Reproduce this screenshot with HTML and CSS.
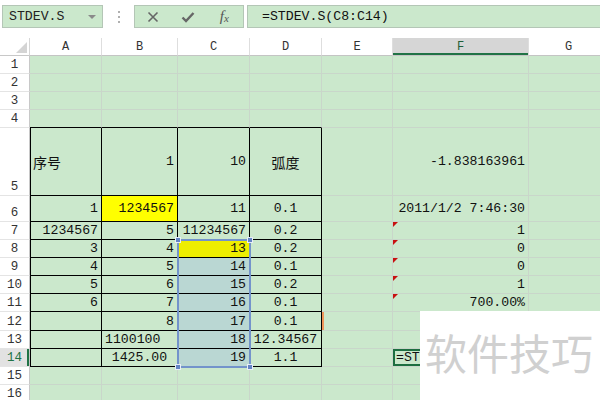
FILE: index.html
```html
<!DOCTYPE html>
<html>
<head>
<meta charset="utf-8">
<link rel="stylesheet" href="styles.css">
</head>
<body>
<div class="toolbar">
  <div class="namebox"><span>STDEV.S</span><span class="caret"></span></div>
  <div class="dots"><i></i><i></i><i></i></div>
  <div class="btns">
    <span class="btn"><svg width="12" height="12" viewBox="0 0 12 12"><path d="M1.5 1.5L10.5 10.5M10.5 1.5L1.5 10.5" stroke="#666" stroke-width="1.6" fill="none"/></svg></span>
    <span class="btn"><svg width="14" height="12" viewBox="0 0 14 12"><path d="M1.5 6.5L5 10L12.5 2" stroke="#666" stroke-width="2.4" fill="none"/></svg></span>
    <span class="btn fx"><i>f</i><i class="sx">x</i></span>
  </div>
  <div class="formula">=STDEV.S(C8:C14)</div>
</div>
<div class="sheet">
  <div class="corner"><span class="tri"></span></div>
  <div class="h">A</div><div class="h">B</div><div class="h">C</div><div class="h">D</div><div class="h">E</div><div class="h hf">F</div><div class="h">G</div>

  <div class="rh">1</div><div class="c"></div><div class="c"></div><div class="c"></div><div class="c"></div><div class="c"></div><div class="c"></div><div class="c"></div>
  <div class="rh">2</div><div class="c"></div><div class="c"></div><div class="c"></div><div class="c"></div><div class="c"></div><div class="c"></div><div class="c"></div>
  <div class="rh">3</div><div class="c"></div><div class="c"></div><div class="c"></div><div class="c"></div><div class="c"></div><div class="c"></div><div class="c"></div>
  <div class="rh">4</div><div class="c tb"></div><div class="c tb"></div><div class="c tb"></div><div class="c tb"></div><div class="c"></div><div class="c"></div><div class="c"></div>

  <div class="rh">5</div><div class="c t tl cjk">序号</div><div class="c t r">1</div><div class="c t r">10</div><div class="c t m cjk">弧度</div><div class="c"></div><div class="c r">-1.838163961</div><div class="c"></div>
  <div class="rh">6</div><div class="c t tl r">1</div><div class="c t r y">1234567</div><div class="c t r">11</div><div class="c t m">0.1</div><div class="c"></div><div class="c r">2011/1/2 7:46:30</div><div class="c"></div>
  <div class="rh">7</div><div class="c t tl r">1234567</div><div class="c t r">5</div><div class="c t r">11234567</div><div class="c t m">0.2</div><div class="c"></div><div class="c r err">1</div><div class="c"></div>
  <div class="rh">8</div><div class="c t tl r">3</div><div class="c t r">4</div><div class="c t r ys">13</div><div class="c t m">0.2</div><div class="c"></div><div class="c r err">0</div><div class="c"></div>
  <div class="rh">9</div><div class="c t tl r">4</div><div class="c t r">5</div><div class="c t r sel">14</div><div class="c t m">0.1</div><div class="c"></div><div class="c r err">0</div><div class="c"></div>
  <div class="rh">10</div><div class="c t tl r">5</div><div class="c t r">6</div><div class="c t r sel">15</div><div class="c t m">0.2</div><div class="c"></div><div class="c r err">1</div><div class="c"></div>
  <div class="rh">11</div><div class="c t tl r">6</div><div class="c t r">7</div><div class="c t r sel">16</div><div class="c t m">0.1</div><div class="c"></div><div class="c r err">700.00%</div><div class="c"></div>
  <div class="rh">12</div><div class="c t tl"></div><div class="c t r">8</div><div class="c t r sel">17</div><div class="c t m">0.1</div><div class="c om"></div><div class="c"></div><div class="c"></div>
  <div class="rh">13</div><div class="c t tl"></div><div class="c t">1100100</div><div class="c t r sel">18</div><div class="c t m">12.34567</div><div class="c"></div><div class="c"></div><div class="c"></div>
  <div class="rh act">14</div><div class="c t tl"></div><div class="c t m">1425.00</div><div class="c t r sel">19</div><div class="c t m">1.1</div><div class="c"></div><div class="c active">=ST</div><div class="c"></div>
  <div class="rh">15</div><div class="c"></div><div class="c"></div><div class="c"></div><div class="c"></div><div class="c"></div><div class="c"></div><div class="c"></div>
  <div class="rh">16</div><div class="c"></div><div class="c"></div><div class="c"></div><div class="c"></div><div class="c"></div><div class="c"></div><div class="c"></div>

  <div class="selection">
    <span class="hd h1"></span><span class="hd h2"></span><span class="hd h3"></span><span class="hd h4"></span>
  </div>
  <div class="watermark">软件技巧</div>
</div>
</body>
</html>
```

FILE: styles.css
```css
* { box-sizing: border-box; }
html, body {
  margin: 0;
  padding: 0;
  background: #fff;
}
body {
  width: 600px;
  height: 400px;
  overflow: hidden;
  font-family: "Liberation Mono", "Noto Sans CJK SC", monospace;
  font-size: 13.2px;
  color: #111;
}

/* ---------- toolbar ---------- */
.toolbar {
  display: flex;
  align-items: flex-start;
  height: 38px;
  padding: 5px 0 0 2px;
}
.namebox {
  width: 101px;
  height: 23px;
  border: 1px solid #b4c6b6;
  background: #cbe8cc;
  display: flex;
  align-items: center;
  padding-left: 6px;
  color: #222;
}
.caret {
  margin-left: auto;
  margin-right: 6px;
  width: 0;
  height: 0;
  border-left: 4px solid transparent;
  border-right: 4px solid transparent;
  border-top: 4px solid #8a8a8a;
}
.dots {
  width: 31px;
  height: 23px;
  display: flex;
  flex-direction: column;
  align-items: center;
  justify-content: center;
  gap: 3px;
}
.dots i {
  display: block;
  width: 2px;
  height: 2px;
  background: #b0b0b0;
}
.btns {
  width: 110px;
  height: 23px;
  border: 1px solid #b4c6b6;
  background: #cbe8cc;
  display: flex;
  align-items: center;
}
.btn {
  width: 36px;
  display: flex;
  justify-content: center;
  align-items: center;
}
.btn.fx {
  width: 38px;
  font-family: "Liberation Serif", serif;
  font-style: italic;
  color: #555;
  font-size: 15px;
}
.fx i { font-style: italic; }
.fx .sx { font-size: 11px; position: relative; top: 1px; }
.formula {
  flex: 1;
  height: 23px;
  margin-left: 3px;
  margin-right: -2px;
  border: 1px solid #b4c6b6;
  background: #cbe8cc;
  display: flex;
  align-items: center;
  padding-left: 14px;
  color: #111;
}

/* ---------- sheet ---------- */
.sheet {
  position: relative;
  display: grid;
  grid-template-columns: 30px 72px 76px 72px 72px 71px 136px 80px;
  grid-template-rows: 18px 18px 18px 18px 18px 68px 26px 18px 18px 18px 18px 18px 19px 18px 18px 18px 18px;
  width: 600px;
  overflow: hidden;
}
.c {
  background: #cbe8cc;
  border-right: 1px solid #c9d6ca;
  border-bottom: 1px solid #c9d6ca;
  display: flex;
  align-items: center;
  padding: 0 3px;
  white-space: nowrap;
  overflow: hidden;
  position: relative;
}
.corner {
  background: #fff;
  border-right: 1px solid #d6d6d6;
  border-bottom: 1px solid #c8c8c8;
  display: flex;
  justify-content: flex-end;
  align-items: flex-end;
  padding: 0 2px 2px 0;
}
.tri {
  width: 0;
  height: 0;
  border-left: 11px solid transparent;
  border-bottom: 11px solid #d4d4d4;
}
.h {
  background: #fff;
  border-right: 1px solid #dedede;
  border-bottom: 1px solid #c4c4c4;
  display: flex;
  justify-content: center;
  align-items: center;
  font-size: 12px;
  color: #333;
}
.hf {
  background: #d6d6d6;
  box-shadow: inset 0 -2px 0 #217346;
  color: #1f5f38;
}
.rh {
  background: #fff;
  border-right: 1px solid #c8c8c8;
  border-bottom: 1px solid #e4e4e4;
  display: flex;
  justify-content: center;
  align-items: flex-end;
  font-size: 12.5px;
  line-height: 16px;
  color: #333;
}
.rh.act {
  background: #e2e2e2;
  color: #217346;
  box-shadow: inset -2px 0 0 #217346;
}

.r { justify-content: flex-end; }
.m { justify-content: center; }
.cjk { font-family: "Noto Sans CJK SC", sans-serif; font-size: 14px; }
.t { border-right-color: #000; border-bottom-color: #000; }
.tl { box-shadow: inset 1px 0 0 #000; }
.tb { border-bottom-color: #000; }
.y { background: #ffff00; }
.sel { background: #bad7d3; }
.ys { background: #eeee00; }
.om { box-shadow: inset 2px 0 0 #f0955a; }
.err::before {
  content: "";
  position: absolute;
  top: 0;
  left: 0;
  border-top: 5px solid #c81010;
  border-right: 5px solid transparent;
}
.active {
  box-shadow: inset 0 0 0 2px #1d6e40;
  padding-left: 3px;
}

.selection {
  position: absolute;
  left: 177px;
  top: 201px;
  width: 74px;
  height: 129px;
  border: 2px solid #7393cb;
}
.hd {
  position: absolute;
  width: 6px;
  height: 6px;
  background: #6585c4;
  border: 1px solid #e8eef8;
}
.h1 { left: -4px; top: -4px; }
.h2 { right: -4px; top: -4px; }
.h3 { left: -4px; bottom: -4px; }
.h4 { right: -4px; bottom: -4px; }

.watermark {
  position: absolute;
  left: 420px;
  top: 273px;
  right: 0;
  bottom: 0;
  background: #fff;
  font-family: "Noto Sans CJK SC", sans-serif;
  font-size: 42px;
  line-height: 1;
  color: #d0d0d0;
  padding: 20px 0 0 5px;
  white-space: nowrap;
}
```
